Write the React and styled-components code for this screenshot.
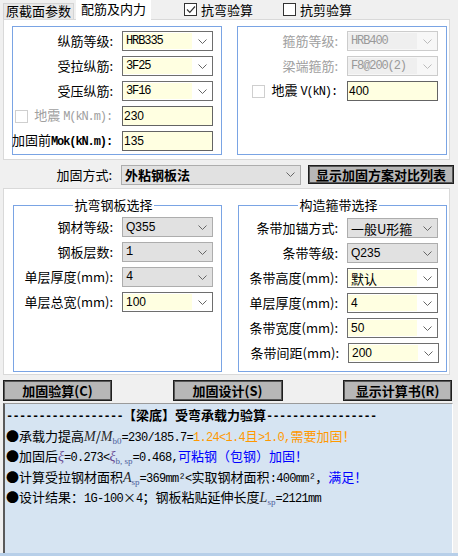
import React from "react";
import styled, { createGlobalStyle } from "styled-components";

const CJK = `"Noto Sans CJK SC", "Microsoft YaHei", sans-serif`;
const MONO = `"Liberation Mono", "DejaVu Sans Mono", monospace`;
const SANS = `"Liberation Sans", Arial, sans-serif`;

const Global = createGlobalStyle`
  html, body { margin: 0; padding: 0; background: #f0f0f0; }
  #root { width: 458px; height: 556px; }
  * { box-sizing: border-box; }
`;

const Root = styled.div`
  width: 458px;
  height: 556px;
  overflow: hidden;
  background: #f0f0f0;
  font-family: ${CJK};
  font-size: 13px;
  color: #000;
  display: flex;
  flex-direction: column;
`;

/* ---------- top tab bar ---------- */
const TopBar = styled.div`
  height: 19px;
  display: flex;
  align-items: flex-end;
  padding-left: 3px;
  position: relative;
  z-index: 1;
`;

const Tab = styled.div`
  width: ${(p) => p.$w}px;
  height: ${(p) => (p.$active ? 20 : 16)}px;
  margin-left: ${(p) => (p.$active ? 2 : 0)}px;
  margin-bottom: ${(p) => (p.$active ? -1 : 0)}px;
  background: ${(p) => (p.$active ? "#ffffff" : "#e8e8e8")};
  border: 1px solid ${(p) => (p.$active ? "#ffffff" : "#d4d4d4")};
  border-bottom: none;
  font-size: 13px;
  line-height: ${(p) => (p.$active ? 15 : 14)}px;
  text-align: center;
  white-space: nowrap;
`;

const CheckItem = styled.label`
  display: flex;
  align-items: center;
  gap: 4px;
  margin-left: ${(p) => p.$ml}px;
  align-self: center;
  font-size: 13px;
  line-height: 15px;
  color: ${(p) => (p.$disabled ? "#999" : "#000")};
  white-space: nowrap;
`;

const Box = styled.span`
  width: 13px;
  height: 13px;
  flex: none;
  display: inline-flex;
  align-items: center;
  justify-content: center;
  background: #fff;
  border: 1px solid ${(p) => (p.$disabled ? "#cfcfcf" : "#333")};
`;

function CheckBox({ checked, disabled }) {
  return (
    <Box $disabled={disabled}>
      {checked && (
        <svg width="10" height="9" viewBox="0 0 10 9">
          <polyline points="1,4.5 3.8,7.3 9,1.5" fill="none" stroke="#333" strokeWidth="1.2" />
        </svg>
      )}
    </Box>
  );
}

/* ---------- panels / groups ---------- */
const Panel = styled.div`
  margin-left: 3px;
  margin-top: ${(p) => p.$mt || 0}px;
  width: 447px;
  height: ${(p) => p.$h}px;
  background: #fff;
  border: 1px solid #d9d9d9;
  display: flex;
  gap: ${(p) => p.$gap}px;
  padding: ${(p) => p.$pad};
`;

const Group = styled.fieldset`
  margin: 0;
  min-width: 0;
  width: ${(p) => p.$w}px;
  height: ${(p) => p.$h}px;
  border: 1px solid #7aa4e4;
  padding: ${(p) => p.$pad};
  display: flex;
  flex-direction: column;
  gap: 5px;
`;

const Legend = styled.legend`
  margin: 0 auto;
  padding: 0 1px;
  font-size: 13px;
  line-height: 16px;
  color: #000;
`;

const Row = styled.div`
  height: 20px;
  display: flex;
  align-items: center;
  justify-content: flex-end;
  margin-right: ${(p) => p.$shift || 0}px;
`;

const Label = styled.span`
  display: flex;
  align-items: center;
  gap: 6px;
  white-space: nowrap;
  font-size: 13px;
  line-height: 16px;
  color: ${(p) => (p.$disabled ? "#a0a0a0" : "#000")};
  margin-right: ${(p) => p.$mr ?? 9}px;
`;

const MonoText = styled.span`
  font-family: ${MONO};
  font-size: 12px;
  letter-spacing: -1.1px;
  font-weight: ${(p) => (p.$bold ? 700 : 400)};
`;

/* ---------- combo / input ---------- */
const ComboBox = styled.div`
  width: ${(p) => p.$w}px;
  height: 20px;
  display: flex;
  flex: none;
  border: 1px solid
    ${(p) => (p.$variant === "gray" ? "#adadad" : p.$variant === "disabled" ? "#cccccc" : "#6e6e6e")};
  background: ${(p) => (p.$variant === "gray" ? "#e1e1e1" : p.$variant === "disabled" ? "#f7f7f7" : "#ffffff")};
  padding: 1px 0;
`;

const ComboValue = styled.div`
  flex: 1;
  min-width: 0;
  background: ${(p) => (p.$variant === "yellow" ? "#ffffe1" : p.$variant === "disabled" ? "#efefef" : "transparent")};
  padding-left: 3px;
  display: flex;
  align-items: center;
  white-space: nowrap;
  color: ${(p) => (p.$variant === "disabled" ? "#999" : "#000")};
  font-family: ${(p) => (p.$mono ? MONO : p.$cjk ? CJK : SANS)};
  font-size: ${(p) => (p.$mono ? "12px" : p.$cjk ? "13px" : "12px")};
  letter-spacing: ${(p) => (p.$mono ? "-1.1px" : "0")};
  font-weight: ${(p) => (p.$bold ? 700 : 400)};
`;

const ArrowCell = styled.div`
  width: 20px;
  flex: none;
  display: flex;
  align-items: center;
  justify-content: center;
`;

function Chevron({ color = "#666" }) {
  return (
    <svg width="9" height="5" viewBox="0 0 9 5">
      <polyline points="0.5,0.5 4.5,4.5 8.5,0.5" fill="none" stroke={color} strokeWidth="1" />
    </svg>
  );
}

function Combo({ value, variant = "yellow", mono, cjk, bold, w = 91 }) {
  return (
    <ComboBox $variant={variant} $w={w}>
      <ComboValue $variant={variant} $mono={mono} $cjk={cjk} $bold={bold}>
        {value}
      </ComboValue>
      <ArrowCell>
        <Chevron color={variant === "disabled" ? "#bbb" : "#666"} />
      </ArrowCell>
    </ComboBox>
  );
}

const Input = styled.div`
  width: 91px;
  height: 20px;
  flex: none;
  border: 1px solid #646464;
  background: #ffffe1;
  font-family: ${SANS};
  font-size: 12px;
  line-height: 18px;
  padding-left: 1px;
`;

/* ---------- method row ---------- */
const MethodRow = styled.div`
  margin-top: 4px;
  height: 21px;
  display: flex;
  align-items: center;
`;

const MethodLabel = styled.span`
  width: 112px;
  text-align: right;
  font-size: 13px;
  margin-right: 9px;
`;

const Button = styled.div`
  width: ${(p) => p.$w}px;
  height: ${(p) => p.$h || 21}px;
  margin-left: ${(p) => p.$ml || 0}px;
  background: #b7b7b7;
  border: 1px solid #1e1e1e;
  box-shadow: inset 0 0 0 1px #575757;
  display: flex;
  align-items: center;
  justify-content: center;
  font-size: 13px;
  font-weight: 700;
  white-space: nowrap;
`;

const ButtonRow = styled.div`
  margin-top: 5px;
  height: 21px;
  padding: 0 6px 0 3px;
  display: flex;
  justify-content: space-between;
`;

/* ---------- result area ---------- */
const Result = styled.div`
  margin-top: 2px;
  margin-left: 3px;
  width: 450px;
  flex: 1;
  background: #d6e4f2;
  border-left: 2px solid #5a5a5a;
  border-top: 1px solid #9a9a9a;
  border-right: 1px solid #ffffff;
  padding: 2px 0 0 1px;
  font-size: 13px;
  line-height: 17.5px;
  white-space: nowrap;
  overflow: hidden;
`;

const BottomStrip = styled.div`
  height: 3px;
  background: #b7cfe9;
`;

const Line = styled.div`
  font-weight: ${(p) => (p.$bold ? 700 : 400)};
`;

const Asc = styled.span`
  font-family: ${MONO};
  font-size: 12px;
  letter-spacing: -0.7px;
`;

function Mixed({ children }) {
  const parts = String(children).split(/([\x20-\x7e²]+)/);
  return parts.map((s, i) => (i % 2 ? <Asc key={i}>{s}</Asc> : <React.Fragment key={i}>{s}</React.Fragment>));
}

const Ital = styled.span`
  font-family: "Liberation Serif", "Times New Roman", serif;
  font-style: italic;
  font-size: 14px;
  color: ${(p) => p.$c || "#2a2a2a"};
`;

const Sub = styled.span`
  font-family: "Liberation Serif", "Times New Roman", serif;
  font-size: 9px;
  line-height: 0;
  vertical-align: -3px;
  color: #4d5e9c;
`;

const Colored = styled.span`
  color: ${(p) => p.$c};
`;

export default function App() {
  return (
    <Root>
      <Global />
      <TopBar>
        <Tab $w={71}>原截面参数</Tab>
        <Tab $w={75} $active>
          配筋及内力
        </Tab>
        <CheckItem $ml={33}>
          <CheckBox checked />
          抗弯验算
        </CheckItem>
        <CheckItem $ml={30}>
          <CheckBox />
          抗剪验算
        </CheckItem>
      </TopBar>

      <Panel $h={141} $gap={15} $pad="6px 2px 0 8px">
        <Group $w={211} $h={129} $pad="4px 8px 0 0">
          <Row>
            <Label>纵筋等级:</Label>
            <Combo value="HRB335" mono />
          </Row>
          <Row>
            <Label>受拉纵筋:</Label>
            <Combo value="3F25" mono />
          </Row>
          <Row>
            <Label>受压纵筋:</Label>
            <Combo value="3F16" mono />
          </Row>
          <Row>
            <Label $disabled $mr={10}>
              <CheckBox disabled />
              <span>
                地震 <MonoText>M(kN.m):</MonoText>
              </span>
            </Label>
            <Input>230</Input>
          </Row>
          <Row>
            <Label $mr={10}>
              <span>
                加固前<MonoText $bold>Mok(kN.m):</MonoText>
              </span>
            </Label>
            <Input>135</Input>
          </Row>
        </Group>

        <Group $w={211} $h={129} $pad="4px 8px 0 0">
          <Row>
            <Label $disabled>箍筋等级:</Label>
            <Combo value="HRB400" mono variant="disabled" />
          </Row>
          <Row>
            <Label $disabled>梁端箍筋:</Label>
            <Combo value="F8@200(2)" mono variant="disabled" />
          </Row>
          <Row>
            <Label $mr={10}>
              <CheckBox disabled />
              <span>
                地震 <MonoText>V(kN):</MonoText>
              </span>
            </Label>
            <Input>400</Input>
          </Row>
        </Group>
      </Panel>

      <MethodRow>
        <MethodLabel>加固方式:</MethodLabel>
        <Combo value="外粘钢板法" cjk bold variant="gray" w={180} />
        <Button $w={146} $h={19} $ml={7}>
          显示加固方案对比列表
        </Button>
      </MethodRow>

      <Panel $mt={3} $h={187} $gap={16} $pad="8px 2px 0 9px">
        <Group $w={209} $h={175} $pad="4px 8px 0 0">
          <Legend>抗弯钢板选择</Legend>
          <Row>
            <Label>钢材等级:</Label>
            <Combo value="Q355" variant="gray" />
          </Row>
          <Row>
            <Label>钢板层数:</Label>
            <Combo value="1" mono variant="gray" />
          </Row>
          <Row>
            <Label>单层厚度(mm):</Label>
            <Combo value="4" mono variant="gray" />
          </Row>
          <Row>
            <Label>单层总宽(mm):</Label>
            <Combo value="100" />
          </Row>
        </Group>

        <Group $w={209} $h={175} $pad="5px 8px 0 0">
          <Legend>构造箍带选择</Legend>
          <Row>
            <Label>条带加锚方式:</Label>
            <Combo value="一般U形箍" cjk variant="gray" />
          </Row>
          <Row>
            <Label>条带等级:</Label>
            <Combo value="Q235" variant="gray" />
          </Row>
          <Row>
            <Label>条带高度(mm):</Label>
            <Combo value="默认" cjk />
          </Row>
          <Row>
            <Label>单层厚度(mm):</Label>
            <Combo value="4" />
          </Row>
          <Row>
            <Label>条带宽度(mm):</Label>
            <Combo value="50" />
          </Row>
          <Row $shift={-1}>
            <Label>条带间距(mm):</Label>
            <Combo value="200" />
          </Row>
        </Group>
      </Panel>

      <ButtonRow>
        <Button $w={109}>加固验算(C)</Button>
        <Button $w={110}>加固设计(S)</Button>
        <Button $w={109}>显示计算书(R)</Button>
      </ButtonRow>

      <Result>
        <Line $bold>
          <Mixed>{"------------------【梁底】受弯承载力验算-----------------"}</Mixed>
        </Line>
        <Line>
          ●承载力提高<Ital>M</Ital>/<Ital>M</Ital>
          <Sub>b0</Sub>
          <Mixed>{"=230/185.7="}</Mixed>
          <Colored $c="#ff9900">
            <Mixed>{"1.24<1.4且>1.0,需要加固！"}</Mixed>
          </Colored>
        </Line>
        <Line>
          ●加固后<Ital $c="#6a4c93">ξ</Ital>
          <Mixed>{"=0.273<"}</Mixed>
          <Ital $c="#6a4c93">ξ</Ital>
          <Sub>b, sp</Sub>
          <Mixed>{"=0.468,"}</Mixed>
          <Colored $c="#0000ff">可粘钢（包钢）加固！</Colored>
        </Line>
        <Line>
          ●计算受拉钢材面积<Ital>A</Ital>
          <Sub>sp</Sub>
          <Mixed>{"=369mm²<实取钢材面积:400mm²，"}</Mixed>
          <Colored $c="#0000ff">满足！</Colored>
        </Line>
        <Line>
          ●设计结果：<Mixed>{"1G-100"}</Mixed>×<Mixed>{"4"}</Mixed>；钢板粘贴延伸长度<Ital>L</Ital>
          <Sub>sp</Sub>
          <Mixed>{"=2121mm"}</Mixed>
        </Line>
      </Result>
      <BottomStrip />
    </Root>
  );
}
